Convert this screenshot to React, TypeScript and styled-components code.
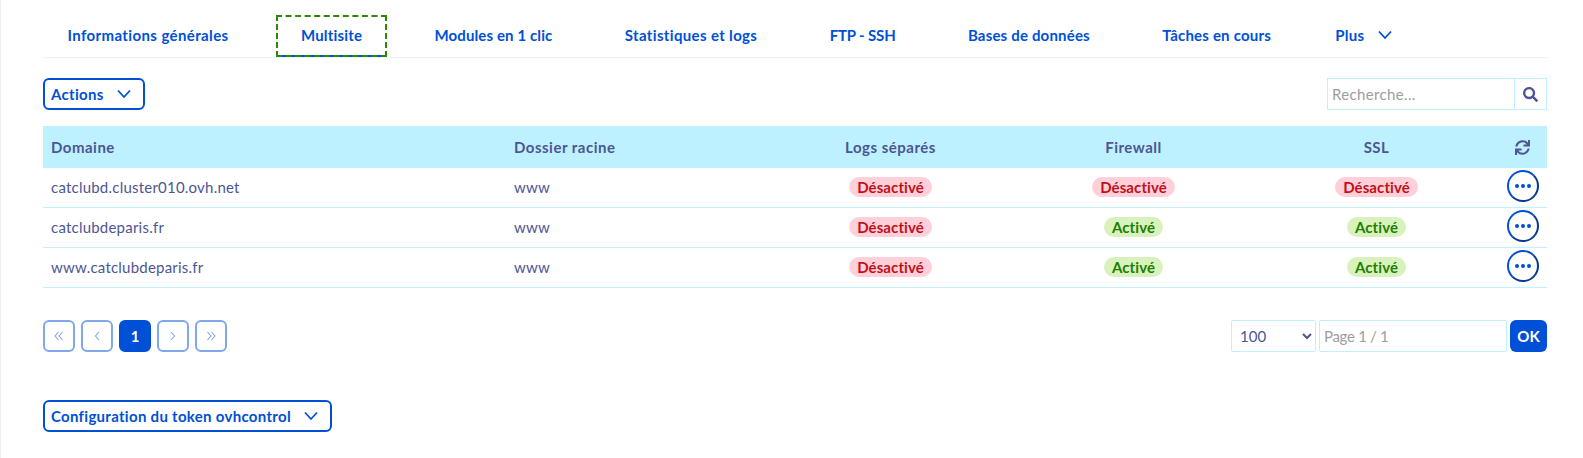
import React from "react";
import styled, { createGlobalStyle } from "styled-components";
import { FaSearch, FaSync } from "react-icons/fa";

const blue = "#0050d7";
const ink = "#4d5693";
const line = "#bef1ff";

const GlobalStyle = createGlobalStyle`
  html, body {
    margin: 0;
    padding: 0;
    background: #fff;
  }
  body {
    font-family: "Lato", "Open Sans", sans-serif;
    font-size: 15px;
    color: ${ink};
  }
`;

const Page = styled.div`
  box-sizing: border-box;
  width: 1583px;
  height: 458px;
  padding: 15px 36px 0 42px;
  border-left: 1px solid #eeeeee;
  overflow: hidden;
`;

const Tabs = styled.nav`
  box-sizing: border-box;
  display: flex;
  gap: 23.3px;
  height: 43px;
  border-bottom: 1px solid #e6f5fc;
`;

const Tab = styled.a<{ $active?: boolean; $spacing: number; $inset?: number }>`
  box-sizing: border-box;
  display: flex;
  align-items: center;
  gap: 12px;
  height: 42px;
  padding: 0 24.5px 2px ${(p) => p.$inset ?? 24.5}px;
  color: ${blue};
  font-size: 15px;
  font-weight: 700;
  letter-spacing: ${(p) => p.$spacing}px;
  white-space: nowrap;
  ${(p) => p.$active && `outline: 2px dashed #2b8a00; outline-offset: -2px; box-shadow: inset 0 -2px 0 ${blue};`}
`;

const Toolbar = styled.div`
  display: flex;
  justify-content: space-between;
  align-items: center;
  margin-top: 20px;
`;

const OutlineButton = styled.button`
  box-sizing: border-box;
  display: inline-flex;
  align-items: center;
  gap: 12px;
  height: 32px;
  padding: 0 11px 0 6px;
  background: #fff;
  border: 2px solid ${blue};
  border-radius: 6px;
  color: ${blue};
  font: 700 15px "Lato", sans-serif;
  letter-spacing: 0.3px;
`;

const Search = styled.div`
  box-sizing: border-box;
  display: flex;
  width: 220px;
  height: 32px;
  border: 1px solid ${line};
`;

const SearchInput = styled.input`
  flex: 1;
  min-width: 0;
  padding: 0 4px 1px;
  border: 0;
  outline: 0;
  font: 400 15px "Lato", sans-serif;
  letter-spacing: 0.35px;
  color: ${ink};
  &::placeholder {
    color: #9e9e9e;
    opacity: 1;
  }
`;

const SearchButton = styled.div`
  display: flex;
  align-items: center;
  justify-content: center;
  width: 31px;
  border-left: 1px solid ${line};
  color: ${ink};
  font-size: 15px;
`;

const Row = styled.div<{ $head?: boolean }>`
  box-sizing: border-box;
  display: grid;
  grid-template-columns: 463px 263px 243px 243px 243px 1fr;
  align-items: center;
  height: ${(p) => (p.$head ? "42px" : "40px")};
  padding-bottom: ${(p) => (p.$head ? "0" : "1px")};
  background: ${(p) => (p.$head ? line : "#fff")};
  border-bottom: ${(p) => (p.$head ? "0" : `1px solid ${line}`)};
  font-weight: ${(p) => (p.$head ? 700 : 400)};
  letter-spacing: ${(p) => (p.$head ? "0.5px" : "0.22px")};
`;

const Table = styled.div`
  margin-top: 16px;
`;

const Cell = styled.div<{ $center?: boolean }>`
  padding: 0 8px;
  text-align: ${(p) => (p.$center ? "center" : "left")};
  white-space: nowrap;
`;

const Pill = styled.span<{ $on: boolean }>`
  display: block;
  width: fit-content;
  margin: 0 auto;
  height: 20px;
  line-height: 20px;
  padding: 0 8px;
  border-radius: 10px;
  font-size: 15px;
  font-weight: 700;
  letter-spacing: 0.1px;
  background: ${(p) => (p.$on ? "#d9f2bd" : "#ffd0d9")};
  color: ${(p) => (p.$on ? "#1d8000" : "#c0101a")};
`;

const ActionCell = styled.div<{ $head?: boolean }>`
  display: flex;
  justify-content: center;
  margin-bottom: ${(p) => (p.$head ? "0" : "2px")};
`;

const DotsButton = styled.button`
  box-sizing: border-box;
  display: flex;
  align-items: center;
  justify-content: center;
  gap: 2px;
  width: 32px;
  height: 32px;
  padding: 0;
  background: #fff;
  border: 2px solid ${blue};
  border-bottom-color: #0a3a96;
  border-right-color: #0a3a96;
  border-radius: 50%;
`;

const Dot = styled.span`
  width: 4px;
  height: 4px;
  border-radius: 50%;
  background: ${blue};
`;

const Footer = styled.div`
  display: flex;
  justify-content: space-between;
  margin-top: 32px;
`;

const Pager = styled.div`
  display: flex;
  gap: 6px;
`;

const PageButton = styled.button<{ $current?: boolean }>`
  box-sizing: border-box;
  display: flex;
  align-items: center;
  justify-content: center;
  width: 32px;
  height: 32px;
  padding: 0;
  border: 2px solid ${(p) => (p.$current ? blue : "#7fa7eb")};
  border-radius: 6px;
  background: ${(p) => (p.$current ? blue : "#fff")};
  color: ${(p) => (p.$current ? "#fff" : "#7fa7eb")};
  font: 700 15px "Lato", sans-serif;
`;

const PageForm = styled.div`
  display: flex;
  gap: 3px;
`;

const SizeSelect = styled.select`
  box-sizing: border-box;
  width: 85px;
  height: 32px;
  padding: 0 4px;
  background: #fff;
  border: 1px solid ${line};
  border-radius: 2px;
  color: ${ink};
  font: 400 15px "Lato", sans-serif;
`;

const PageInput = styled.input`
  box-sizing: border-box;
  width: 188px;
  height: 32px;
  padding: 0 4px 1px;
  border: 1px solid ${line};
  border-radius: 2px;
  font: 400 15px "Lato", sans-serif;
  &::placeholder {
    color: #9e9e9e;
    opacity: 1;
    letter-spacing: -0.3px;
  }
`;

const OkButton = styled.button`
  width: 37px;
  height: 32px;
  padding: 0;
  border: 0;
  border-radius: 6px;
  background: ${blue};
  color: #fff;
  font: 700 15px "Lato", sans-serif;
`;

const TokenRow = styled.div`
  margin-top: 48px;
`;

const Chevron = () => (
  <svg width="16" height="10" viewBox="0 0 16 10" fill="none" stroke="currentColor" strokeWidth="1.8">
    <path d="M2 1.5 8 8l6-6.5" />
  </svg>
);

const PagerIcon = ({ d }: { d: string }) => (
  <svg width="10" height="10" viewBox="0 0 10 10" fill="none" stroke="currentColor" strokeWidth="1.1">
    <path d={d} />
  </svg>
);

const tabs = [
  { label: "Informations générales", spacing: 0.39 },
  { label: "Multisite", spacing: 0.19 },
  { label: "Modules en 1 clic", spacing: 0.12 },
  { label: "Statistiques et logs", spacing: 0.35 },
  { label: "FTP - SSH", spacing: -0.14 },
  { label: "Bases de données", spacing: 0.18 },
  { label: "Tâches en cours", spacing: 0.2 },
];

const rows = [
  { domain: "catclubd.cluster010.ovh.net", logs: false, firewall: false, ssl: false },
  { domain: "catclubdeparis.fr", logs: false, firewall: true, ssl: true },
  { domain: "www.catclubdeparis.fr", logs: false, firewall: true, ssl: true },
];

const Status = ({ on }: { on: boolean }) => (
  <Cell $center>
    <Pill $on={on}>{on ? "Activé" : "Désactivé"}</Pill>
  </Cell>
);

export default function App() {
  return (
    <Page>
      <GlobalStyle />
      <Tabs>
        {tabs.map((t) => (
          <Tab key={t.label} $spacing={t.spacing} $active={t.label === "Multisite"}>
            {t.label}
          </Tab>
        ))}
        <Tab $spacing={0.3} $inset={16.5}>
          Plus <Chevron />
        </Tab>
      </Tabs>

      <Toolbar>
        <OutlineButton>
          Actions <Chevron />
        </OutlineButton>
        <Search>
          <SearchInput placeholder="Recherche..." />
          <SearchButton>
            <FaSearch />
          </SearchButton>
        </Search>
      </Toolbar>

      <Table>
        <Row $head>
          <Cell>Domaine</Cell>
          <Cell>Dossier racine</Cell>
          <Cell $center>Logs séparés</Cell>
          <Cell $center>Firewall</Cell>
          <Cell $center>SSL</Cell>
          <ActionCell $head>
            <FaSync size={15} />
          </ActionCell>
        </Row>
        {rows.map((r) => (
          <Row key={r.domain}>
            <Cell>{r.domain}</Cell>
            <Cell>www</Cell>
            <Status on={r.logs} />
            <Status on={r.firewall} />
            <Status on={r.ssl} />
            <ActionCell>
              <DotsButton>
                <Dot />
                <Dot />
                <Dot />
              </DotsButton>
            </ActionCell>
          </Row>
        ))}
      </Table>

      <Footer>
        <Pager>
          <PageButton>
            <PagerIcon d="M4.500 1 1 5l3.500 4M8.500 1 5 5l3.500 4" />
          </PageButton>
          <PageButton>
            <PagerIcon d="M7 1 3.500 5 7 9" />
          </PageButton>
          <PageButton $current>1</PageButton>
          <PageButton>
            <PagerIcon d="M3 1l3.500 4L3 9" />
          </PageButton>
          <PageButton>
            <PagerIcon d="M1.500 1 5 5 1.500 9M5.500 1 9 5 5.500 9" />
          </PageButton>
        </Pager>
        <PageForm>
          <SizeSelect defaultValue="100">
            <option>100</option>
          </SizeSelect>
          <PageInput placeholder="Page 1 / 1" />
          <OkButton>OK</OkButton>
        </PageForm>
      </Footer>

      <TokenRow>
        <OutlineButton>
          Configuration du token ovhcontrol <Chevron />
        </OutlineButton>
      </TokenRow>
    </Page>
  );
}
